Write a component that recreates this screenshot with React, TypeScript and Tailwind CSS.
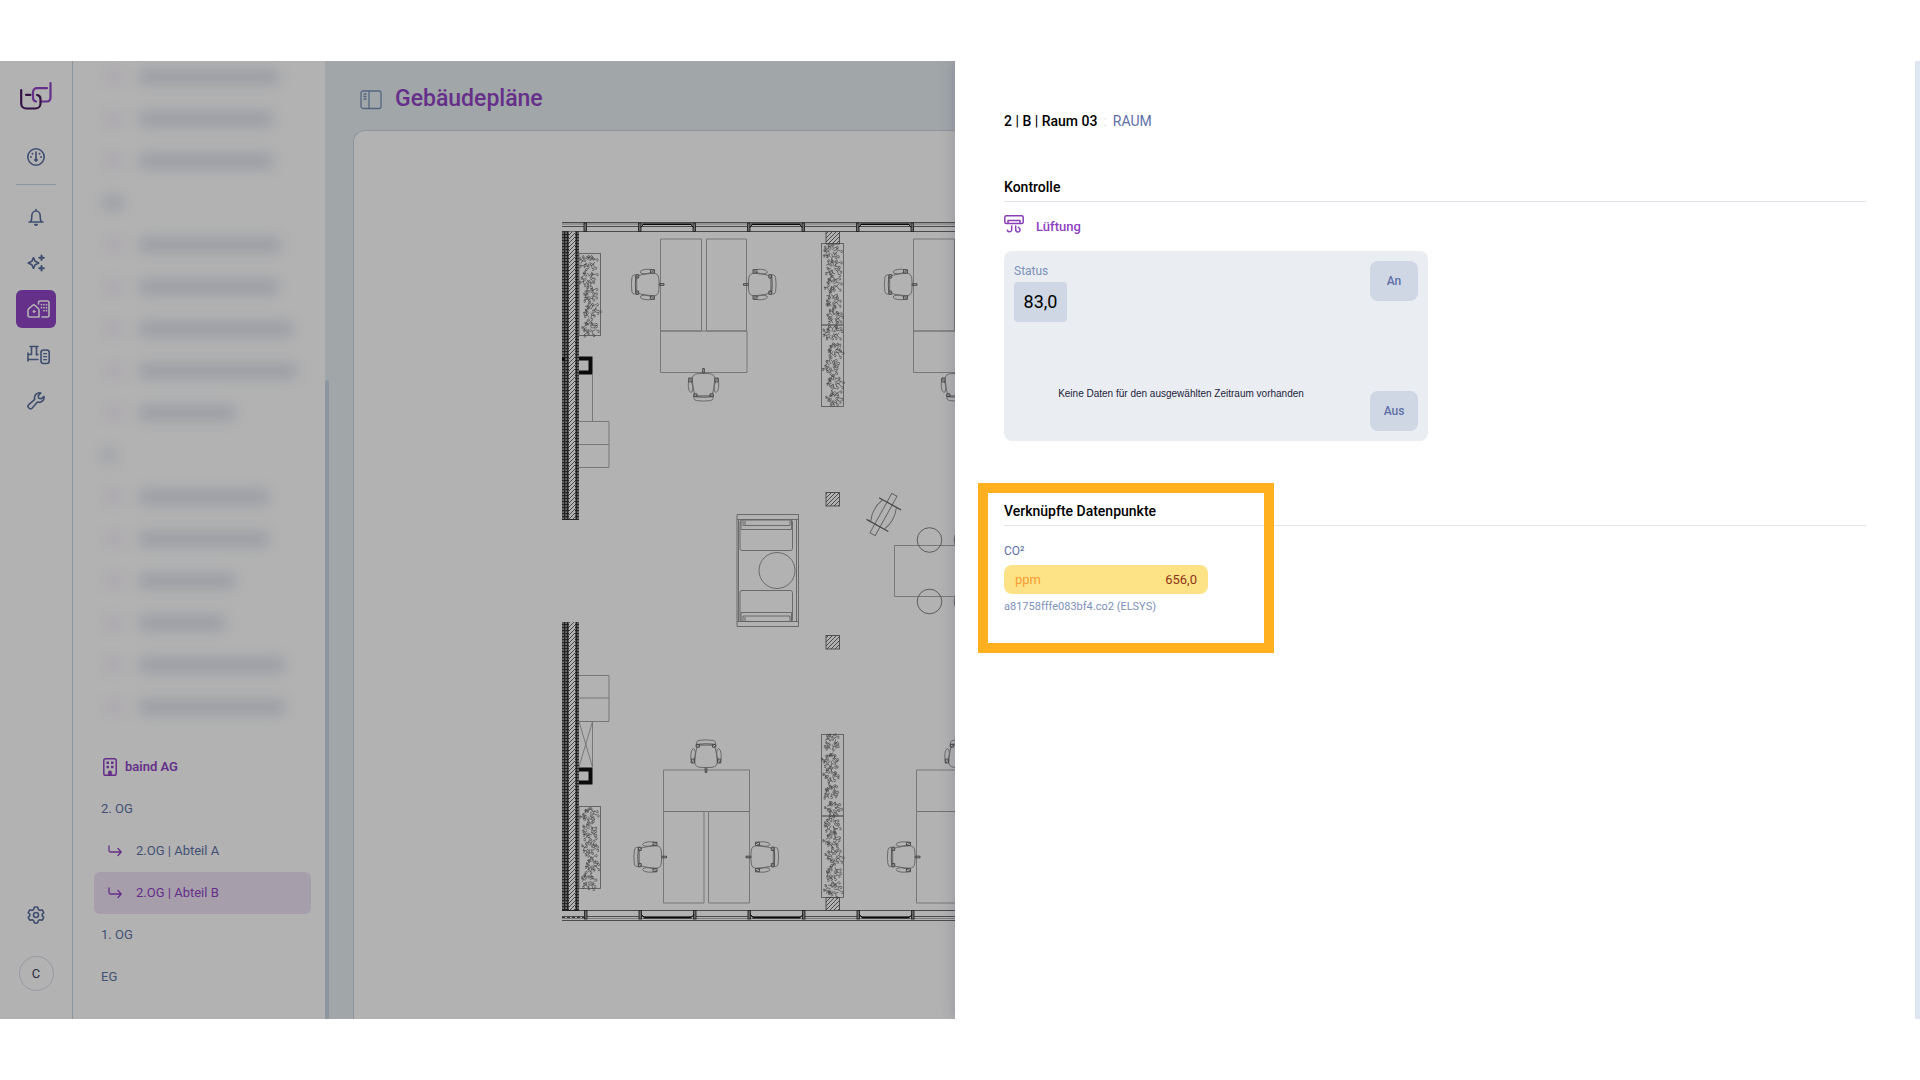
import type { ReactNode } from "react";

const blurredRows = [
  { icon: true, width: 142 },
  { icon: true, width: 136 },
  { icon: true, width: 136 },
  { icon: false, width: 22 },
  { icon: true, width: 144 },
  { icon: true, width: 142 },
  { icon: true, width: 156 },
  { icon: true, width: 160 },
  { icon: true, width: 98 },
  { icon: false, width: 14 },
  { icon: true, width: 132 },
  { icon: true, width: 132 },
  { icon: true, width: 98 },
  { icon: true, width: 88 },
  { icon: true, width: 148 },
  { icon: true, width: 148 },
];

const floors = [
  { label: "2. OG", nested: false, active: false },
  { label: "2.OG | Abteil A", nested: true, active: false },
  { label: "2.OG | Abteil B", nested: true, active: true },
  { label: "1. OG", nested: false, active: false },
  { label: "EG", nested: false, active: false },
];

/* ---------- icons ---------- */

function Logo() {
  return (
    <svg width="34" height="30" viewBox="0 0 34 30" fill="none" strokeLinecap="round" strokeWidth="2.2">
      <path d="M31.500 2v15a3.500 3.500 0 0 1-3.500 3.500h-5.500" stroke="#9145c4" />
      <path d="M28 7.200h-10a4 4 0 0 0-4 4v5.500a4 4 0 0 0 3 3.800" stroke="#9145c4" />
      <path
        d="M2.200 9v13.500a5 5 0 0 0 5 5h9.300a5 5 0 0 0 5-5v-4.500a4 4 0 0 0-3.500-4"
        stroke="#4a1a63"
      />
      <path d="M7 13.800h4.500" stroke="#4a1a63" />
    </svg>
  );
}

function RailIcon({ children, wide }: { children: ReactNode; wide?: boolean }) {
  return (
    <svg
      width={wide ? 24 : 20}
      height="20"
      viewBox={wide ? "0 0 24 20" : "0 0 20 20"}
      fill="none"
      stroke="currentColor"
      strokeWidth="1.6"
      strokeLinecap="round"
      strokeLinejoin="round"
    >
      {children}
    </svg>
  );
}

const GaugeIcon = () => (
  <RailIcon>
    <circle cx="10" cy="10" r="8.200" />
    <path d="M10 5v7" />
    <circle cx="10" cy="13" r="1.300" fill="currentColor" strokeWidth="1" />
    <path d="M5 10h.01M15 10h.01M6.500 6.700h.01M13.500 6.700h.01" strokeWidth="1.900" />
  </RailIcon>
);

const BellIcon = () => (
  <RailIcon>
    <path d="M3 15h14M4.700 15c1-1.500 1.100-3.500 1.100-6a4.200 5 0 0 1 8.400 0c0 2.500.1 4.500 1.100 6M10 4V2.500" />
    <path d="M8.800 17.500c.6.900 1.800.9 2.400 0z" fill="currentColor" />
  </RailIcon>
);

const SparkleIcon = () => (
  <RailIcon>
    <path d="M7.500 4.700 9.200 8.300 12.800 10 9.200 11.700 7.500 15.300 5.800 11.700 2.200 10l3.600-1.700z" />
    <path d="M15.500 2.500v4.600M13.200 4.800h4.600M15.500 13v4.600M13.200 15.300h4.600" strokeWidth="2" />
  </RailIcon>
);

const BuildingsIcon = () => (
  <RailIcon wide>
    <path d="M11.500 18H4a2 2 0 0 1-2-2v-4.500c0-.8.300-1.400.9-1.900L6.500 6.500a2 2 0 0 1 2.600 0l3 2.900c.6.500.9 1.100.9 1.900V18z" />
    <circle cx="8" cy="12.500" r="1" fill="currentColor" strokeWidth="1" />
    <path d="M12.500 5V3.500A1.500 1.500 0 0 1 14 2h7.500A1.500 1.500 0 0 1 23 3.500v13a1.500 1.500 0 0 1-1.500 1.500H16" />
    <path d="M15.500 5.700h.01M18 5.700h.01M20.500 5.700h.01M15.500 8.700h.01M18 8.700h.01M20.500 8.700h.01M18 11.700h.01M20.500 11.700h.01" strokeWidth="1.700" />
  </RailIcon>
);

const FlowIcon = () => (
  <RailIcon wide>
    <path d="M2 8v8M2 9.500h3.500V2M4 1.500h8M10.500 2v8M2 14.500h10" />
    <path d="M10.500 9.500h1.500" />
    <rect x="15" y="5" width="8.200" height="13.500" rx="2.500" />
    <path d="M17.700 8.700h2.800M17.700 11.700h2.800M17.700 14.700h2.800" strokeWidth="1.300" />
  </RailIcon>
);

const WrenchIcon = () => (
  <RailIcon>
    <path d="M18 5.500a5 5 0 0 1-6.600 5.600L6.300 17a2.400 2.400 0 0 1-3.500-3.400l6-5.200A5 5 0 0 1 14.800 2l-2.600 2.900.5 2.400 2.400.5z" />
  </RailIcon>
);

const GearIcon = () => (
  <RailIcon>
    <circle cx="10" cy="10" r="2.500" />
    <path d="M8.300 2.300q1.700-.6 3.400 0l.6 2.200 1.500.9 2.200-.6q1.300 1.200 1.700 2.900l-1.500 1.700v1.300l1.500 1.700q-.4 1.700-1.700 2.900l-2.200-.6-1.500.9-.6 2.200q-1.700.6-3.400 0l-.6-2.200-1.500-.9-2.200.6q-1.300-1.200-1.700-2.900l1.500-1.700V9.300L2.300 7.700Q2.700 6 4 4.800l2.200.6 1.500-.9z" />
  </RailIcon>
);

function BuildingIcon() {
  return (
    <svg width="14" height="18" viewBox="0 0 14 18" fill="none" stroke="currentColor" strokeWidth="1.500">
      <rect x=".8" y=".8" width="12.400" height="16.400" rx="1.800" />
      <path d="M3.500 4.700h2.500M8 4.700h2.500M3.500 9h2.500M8 9h2.500" strokeWidth="2.600" />
      <path d="M5.300 17v-2.500a1.700 1.700 0 0 1 3.400 0V17z" fill="currentColor" strokeWidth=".6" />
    </svg>
  );
}

function BranchIcon() {
  return (
    <svg
      width="14"
      height="12"
      viewBox="0 0 14 12"
      fill="none"
      stroke="#9145c4"
      strokeWidth="1.300"
      strokeLinecap="round"
      strokeLinejoin="round"
    >
      <path d="M1 1v4.500a1.500 1.500 0 0 0 1.500 1.500H13M10 3.500 13.200 7 10 10.500" />
    </svg>
  );
}

function PanelIcon() {
  return (
    <svg width="22" height="20" viewBox="0 0 22 20" fill="none" stroke="#7a92b8" strokeWidth="1.300">
      <rect x="1" y="1" width="20" height="17.500" rx="2" />
      <path d="M9 1v17.500M3.500 4h3M3.500 6.500h3M3.500 9h3" />
    </svg>
  );
}

function VentilationIcon() {
  return (
    <svg
      width="20"
      height="18"
      viewBox="0 0 20 18"
      fill="none"
      stroke="#8a3fb5"
      strokeWidth="1.500"
      strokeLinecap="round"
    >
      <rect x=".8" y=".8" width="18.400" height="7.600" rx="1.500" />
      <path d="M4.500 5.500h11M4 5.500v2.500M16 5.500v2.500" />
      <path d="M7.700 11v4a2.200 2.200 0 0 1-4.300.2M11.700 11v3.700a2.200 2.200 0 0 0 4.400.3c0-1.500-.6-1.700-1.700-2.700" />
    </svg>
  );
}

/* ---------- floor plan ---------- */

// Small deterministic generator, so the foliage is the same on every render
function foliage(x: number, y: number, w: number, h: number, seed: number) {
  let s = seed;
  const rnd = () => {
    s = (s * 16807) % 2147483647;
    return s / 2147483647;
  };
  let d = "";
  const clusters = 5;
  for (let c = 0; c < clusters; c++) {
    const cx = x + w / 2 + (rnd() - 0.5) * 4;
    const cy = y + (h / clusters) * (c + 0.5);
    for (let i = 0; i < 11; i++) {
      const a = (i / 11) * Math.PI * 2 + rnd() * 0.5;
      const r = 5 + rnd() * 5;
      // branches start off-centre to keep the middle of a bush open
      const sx = cx + Math.cos(a) * 2;
      const sy = cy + Math.sin(a) * 2;
      const mx = cx + Math.cos(a) * r * 0.6;
      const my = cy + Math.sin(a) * r * 0.6;
      const ex = cx + Math.cos(a + 0.25) * r;
      const ey = cy + Math.sin(a + 0.25) * r;
      const tx = mx + Math.cos(a - 1.2) * 3;
      const ty = my + Math.sin(a - 1.2) * 3;
      d += `M${sx.toFixed(1)} ${sy.toFixed(1)}L${mx.toFixed(1)} ${my.toFixed(1)}L${ex.toFixed(1)} ${ey.toFixed(1)}`;
      d += `M${mx.toFixed(1)} ${my.toFixed(1)}L${tx.toFixed(1)} ${ty.toFixed(1)}`;
      d += `M${ex.toFixed(1)} ${ey.toFixed(1)}q1.500 -1.500 1.800 .5t-1.800 1`;
    }
  }
  return d;
}

const planters = [
  { x: 579, y: 253.5, w: 21.5, h: 82 },
  { x: 579, y: 806.5, w: 21.5, h: 82 },
  { x: 821.5, y: 243.5, w: 22, h: 81.5 },
  { x: 821.5, y: 325, w: 22, h: 81.5 },
  { x: 821.5, y: 734.5, w: 22, h: 81.5 },
  { x: 821.5, y: 816, w: 22, h: 81.5 },
].map((p, i) => ({ ...p, d: foliage(p.x, p.y, p.w, p.h, 7100 + i * 9700) }));

const columns = [
  { y: 231.5, h: 12.5 },
  { y: 492.5, h: 13.5 },
  { y: 635.5, h: 13.5 },
  { y: 897.5, h: 13 },
];

const chairs = [
  { x: 645.5, y: 284.5, r: -90, flip: true },
  { x: 762, y: 284.5, r: -90 },
  { x: 703.5, y: 387, r: 0 },
  { x: 898.5, y: 284.5, r: -90, flip: true },
  { x: 956.5, y: 387, r: 0 },
  { x: 706, y: 754, r: 180 },
  { x: 648, y: 857, r: -90, flip: true },
  { x: 764.5, y: 857, r: -90 },
  { x: 960, y: 754, r: 180 },
  { x: 901.5, y: 857, r: -90, flip: true },
];

const posts = [585, 639.5, 694, 748.5, 803, 857.5, 912];

function Chair({ x, y, r, flip }: { x: number; y: number; r: number; flip?: boolean }) {
  return (
    <g transform={`translate(${x} ${y}) scale(${flip ? -1 : 1} 1) rotate(${r})`} stroke="#8c8c8c">
      <path d="M-.8-18.500h1.600v5h-1.600z" stroke="#555" />
      <path d="M-6-13.300q6-.7 12 0q5.200.5 5.200 5.300q-.5 8-1.700 13q-.6 3.500-3 3.800h-13q-2.400-.3-3-3.800q-1.200-5-1.700-13q0-4.800 5.200-5.300z" />
      <path d="M-9.600 7.800v3.500q.3 1.900 2.600 2.300q7 1 14 0q2.300-.4 2.600-2.300v-3.500" />
      <path d="M-9 9.700q9 1 18 0" stroke="#666" />
      <path d="M-14-9q-1.600 4-1.200 8.500q.4 5 2.500 6q1.800 0 2-4q0-3-1-6zM14-9q1.600 4 1.200 8.500q-.4 5-2.500 6q-1.800 0-2-4q0-3 1-6z" />
      <path d="M-14.800-9h3.300v4h-3.300zM11.500-9h3.300v4h-3.300zM-9.800 6.800h3.300v2.700h-3.300zM6.500 6.800h3.300v2.700h-3.300z" stroke="#666" />
    </g>
  );
}

function Wall({ y, h }: { y: number; h: number }) {
  return (
    <g stroke="none">
      <rect x="562" y={y} width="17" height={h} fill="url(#brick)" />
      <rect x="569" y={y} width="6" height={h} fill="#fff" />
      <rect x="569" y={y} width="6" height={h} fill="url(#hatch)" />
      <path d={`M562 ${y + h}h17`} stroke="#222" />
    </g>
  );
}

function FloorPlan() {
  return (
    <svg
      width="410"
      height="730"
      viewBox="550 210 410 730"
      fill="none"
      stroke="#a3a3a3"
      strokeWidth=".9"
      className="shrink-0"
      role="img"
      aria-label="Grundriss"
    >
      <defs>
        <pattern id="brick" width="3" height="3" patternUnits="userSpaceOnUse">
          <rect width="3" height="3" fill="#7a7a7a" />
          <path d="M0 .5h3M.5 0v3" stroke="#2a2a2a" />
        </pattern>
        <pattern id="hatch" width="4" height="4" patternUnits="userSpaceOnUse">
          <path d="M-1 1l2-2M0 4l4-4M3 5l2-2" stroke="#444" strokeWidth=".8" />
        </pattern>
      </defs>

      {/* outer walls */}
      <path d="M562 222.500h400M562 226.500h400M562 231.500h400" stroke="#6c6c6c" strokeWidth="1" />
      <path d="M562 224h400" stroke="#999" />
      <path d="M562 910.500h400M562 916.500h400M562 920.500h400" stroke="#6c6c6c" strokeWidth="1" />
      <path d="M562 918.500h400" stroke="#aaa" />
      <path d="M562 917.500h24" stroke="#333" strokeDasharray="3 2" />
      <Wall y={231.5} h={288} />
      <Wall y={622} h={288.5} />
      {posts.map((x) => (
        <g key={x} fill="#999" stroke="#333">
          <rect x={x - 1} y="223" width="2.500" height="8.500" />
          <rect x={x - 0.5} y="910.500" width="2.500" height="8.500" />
        </g>
      ))}
      {[639.5, 748.5, 857.5].map((x) => (
        <g key={x} stroke="#111">
          <path d={`M${x + 3} 224.300h49`} strokeWidth="1.600" />
          <path d={`M${x + 1} 227.500l3-3M${x + 54} 227.500l-3-3`} />
          <path d={`M${x + 4} 917.700h48`} strokeWidth="1.600" />
          <path d={`M${x + 2} 914.500l3 3M${x + 54.500} 914.500l-3 3`} />
        </g>
      ))}

      {/* shaft and cupboards */}
      <path d="M579 358.500h11.500v14H579M579 769.500h11.500v13H579" stroke="#111" strokeWidth="4" />
      <path d="M562 359h3" stroke="#111" strokeWidth="3" />
      <path d="M592.500 375v46.500M579 421.500h30v46h-30M579 444.500h30M579 675.500h30v46h-30M579 698h30" />
      <path d="M579 721.500h13.500v45.500M579 721.500l13.500 45.500M592.500 721.500l-13.500 45.500" />

      {planters.map((p) => (
        <g key={`${p.x}-${p.y}`}>
          <rect x={p.x} y={p.y} width={p.w} height={p.h} stroke="#888" />
          <path d={p.d} stroke="#555" strokeWidth=".6" />
        </g>
      ))}
      {columns.map((c) => (
        <rect key={c.y} x="826" y={c.y} width="13.500" height={c.h} fill="url(#hatch)" stroke="#666" />
      ))}

      {/* desks */}
      <path d="M660.500 239h41v92h-41zM706.500 239h40v92h-40zM660.500 331h86.500v41.500h-86.500zM913.500 239h41v92h-41zM913.500 331h60v41.500h-60z" />
      <path d="M663.500 770h86v41.500h-86zM663.500 811.500h40.500v91.500h-40.500zM708.500 811.500h41v91.500h-41zM916.500 770h60v41.500h-60zM916.500 811.500h60v91.500h-60z" />
      {chairs.map((c) => (
        <Chair key={`${c.x}-${c.y}`} {...c} />
      ))}

      {/* lounge */}
      <g stroke="#8c8c8c">
        <path d="M737 514.500h61.500v112h-61.500zM737 519.500h61.500M737 621.500h61.500M738.500 519.500v102M796.500 519.500v102" />
        <rect x="740" y="520" width="52.500" height="30.500" rx="2" />
        <path d="M741 520.500v9h50.500v-9M743 520.500v5h47v-5M745 521v4" />
        <rect x="740" y="590.500" width="52.500" height="31" rx="2" />
        <path d="M741 621v-8.500h50.500v8.500M743 621v-5h47v5M745 617v4" />
        <circle cx="777" cy="570.500" r="18" />
      </g>

      <g transform="translate(883.500 514.500) rotate(29)" stroke="#8c8c8c">
        <rect x="-3" y="-22.500" width="6" height="45" />
        <path d="M-12-12.500h25M-12.500 12.500h25" stroke="#666" strokeWidth="1.200" />
        <path d="M-8-12q-5 12 0 24M8-12q5 12 0 24" />
      </g>

      <path d="M962 545.500h-67.500v51h67.500" />
      <g stroke="#777">
        <circle cx="929.500" cy="540" r="12.300" />
        <circle cx="929.500" cy="601.500" r="12.300" />
        <circle cx="966.500" cy="540" r="12.300" />
        <circle cx="966.500" cy="601.500" r="12.300" />
      </g>
    </svg>
  );
}

/* ---------- layout ---------- */

function RailButton({ label, active, children }: { label: string; active?: boolean; children: ReactNode }) {
  return (
    <button
      aria-label={label}
      className={`flex h-[38px] w-10 items-center justify-center rounded-md ${
        active ? "bg-[#9145c4] pl-1 text-white" : "text-[#5b6f9f]"
      }`}
    >
      {children}
    </button>
  );
}

function Rail() {
  return (
    <nav className="flex w-[73px] shrink-0 flex-col items-center border-r border-[#cbd4e6] bg-white pt-5 pb-7">
      <Logo />
      <div className="mt-[27px] flex w-10 flex-col border-b border-[#cbd4e6] pb-2">
        <RailButton label="Dashboard">
          <GaugeIcon />
        </RailButton>
      </div>
      <div className="mt-[13px] flex flex-col gap-2">
        <RailButton label="Benachrichtigungen">
          <BellIcon />
        </RailButton>
        <RailButton label="Assistent">
          <SparkleIcon />
        </RailButton>
        <RailButton label="Gebäudepläne" active>
          <BuildingsIcon />
        </RailButton>
        <RailButton label="Anlagen">
          <span className="pl-1">
            <FlowIcon />
          </span>
        </RailButton>
        <RailButton label="Wartung">
          <WrenchIcon />
        </RailButton>
      </div>
      <div className="mt-auto flex flex-col items-center gap-[22px]">
        <RailButton label="Einstellungen">
          <GearIcon />
        </RailButton>
        <button className="size-[35px] rounded-full border border-[#d9dce8] text-[13px] text-[#3b4261]">C</button>
      </div>
    </nav>
  );
}

function Sidebar() {
  return (
    <aside className="flex shrink-0 overflow-hidden">
      <div className="flex w-[252px] flex-col justify-end overflow-hidden bg-white pr-3.5 pb-[21px] pl-[21px] text-[13px] text-[#6175a8]">
        {blurredRows.map((row, i) => (
          <div key={i} className="flex h-[42px] shrink-0 items-center gap-4 pb-0.5 pl-3" aria-hidden="true">
            {row.icon && <span className="size-4 rounded-full bg-[#9145c4]/10 blur-[7px]" />}
            <span
              className={`h-4 rounded-full bg-[#5b6f9f]/20 blur-[7px] ${row.icon ? "" : "-ml-1"}`}
              style={{ width: row.width }}
            />
          </div>
        ))}
        <a href="#baind" className="mt-[17px] flex h-[42px] shrink-0 items-center gap-2 pl-[9px] font-semibold text-[#9145c4]">
          <BuildingIcon />
          baind AG
        </a>
        {floors.map((floor) => (
          <a
            key={floor.label}
            href="#plan"
            className={`flex h-[42px] shrink-0 items-center rounded-md ${floor.nested ? "gap-[14px] pl-3.5" : "pl-[7px]"} ${
              floor.active ? "bg-[#efe3f6] text-[#9145c4]" : ""
            }`}
          >
            {floor.nested && <BranchIcon />}
            {floor.label}
          </a>
        ))}
      </div>
      <div className="flex w-1 flex-col justify-end bg-[#e7eef2]">
        <div className="h-2/3 rounded-t-full bg-[#cbd6e4]" />
      </div>
    </aside>
  );
}

function PlanView() {
  return (
    <main className="flex min-w-0 flex-1 flex-col bg-[#e7eef2] pl-6">
      <header className="flex h-[69px] shrink-0 items-center gap-[13px] pt-2 pl-[7px]">
        <PanelIcon />
        <h1 className="text-[23px] font-medium text-[#9145c4]">Gebäudepläne</h1>
      </header>
      <div className="flex flex-1 overflow-hidden rounded-tl-xl border-t border-l border-[#cbd4e6] bg-white pt-[79px] pl-[196px]">
        <FloorPlan />
      </div>
    </main>
  );
}

function SectionTitle({ children }: { children: ReactNode }) {
  return <h3 className="h-[26px] border-b border-[#e1e3ed] text-sm leading-[22px] font-medium text-black">{children}</h3>;
}

function RoomDrawer() {
  return (
    <section
      role="dialog"
      aria-label="2 | B | Raum 03"
      className="w-1/2 overflow-hidden bg-white px-[49px] pt-[49px] shadow-[0_0_14px_rgba(60,50,90,0.25)]"
    >
      <h2 className="flex items-center text-sm leading-[22px] text-[#5e70a6]">
        <span className="font-medium text-black">2 | B | Raum 03</span>
        <span className="px-1.5 text-[#d5dcea]">:</span>
        <span>RAUM</span>
      </h2>

      <div className="mt-11">
        <SectionTitle>Kontrolle</SectionTitle>
        <div className="mt-3 flex h-7 gap-3 pt-px">
          <VentilationIcon />
          <span className="text-[13px] leading-6 font-medium text-[#8e3fbf]">Lüftung</span>
        </div>
        <div className="mt-[9px] flex h-[190px] w-[424px] justify-between rounded-lg bg-[#eaeef3] p-2.5">
          <div className="flex flex-1 flex-col items-start">
            <span className="text-xs leading-5 text-[#7c90b9]">Status</span>
            <output className="mt-px flex h-10 w-[53px] items-center justify-center rounded bg-[#cfd7e5] text-lg text-black">
              83,0
            </output>
            <p className="mt-[66px] w-full text-center font-['Liberation_Sans',sans-serif] text-[10px] leading-3 text-[#23233a]">
              Keine Daten für den ausgewählten Zeitraum vorhanden
            </p>
          </div>
          <div className="flex flex-col justify-between pl-[22px]">
            <button className="h-10 w-12 rounded-lg bg-[#cfd7e5] text-xs font-medium text-[#5e70a6]">An</button>
            <button className="h-10 w-12 rounded-lg bg-[#cfd7e5] text-xs font-medium text-[#5e70a6]">Aus</button>
          </div>
        </div>
      </div>

      <div className="relative mt-[59px]">
        <SectionTitle>Verknüpfte Datenpunkte</SectionTitle>
        <div className="mt-[15px] w-[204px]">
          <div className="text-xs leading-5 text-[#5e70a6]">CO²</div>
          <div className="mt-1 flex h-[29px] items-center justify-between rounded-lg bg-[#fde386] px-[11px] text-[13px]">
            <span className="text-[#fd9c35]">ppm</span>
            <span className="text-[#8f3518]">656,0</span>
          </div>
          <div className="mt-1 text-[11px] leading-[18px] whitespace-nowrap text-[#7c90b9]">
            a81758fffe083bf4.co2 (ELSYS)
          </div>
        </div>
        <div className="absolute -top-[17px] -left-[26px] h-[170px] w-[296px] border-10 border-[#feb021]" />
      </div>
    </section>
  );
}

export default function App() {
  return (
    <div className="h-screen bg-white py-[61px] font-['Roboto',sans-serif]">
      <div className="relative flex h-full overflow-hidden">
        <Rail />
        <Sidebar />
        <PlanView />
        <div className="absolute inset-0 flex justify-end bg-black/30">
          <RoomDrawer />
          <div className="w-[5px] bg-[#dee6ef]" />
        </div>
      </div>
    </div>
  );
}
